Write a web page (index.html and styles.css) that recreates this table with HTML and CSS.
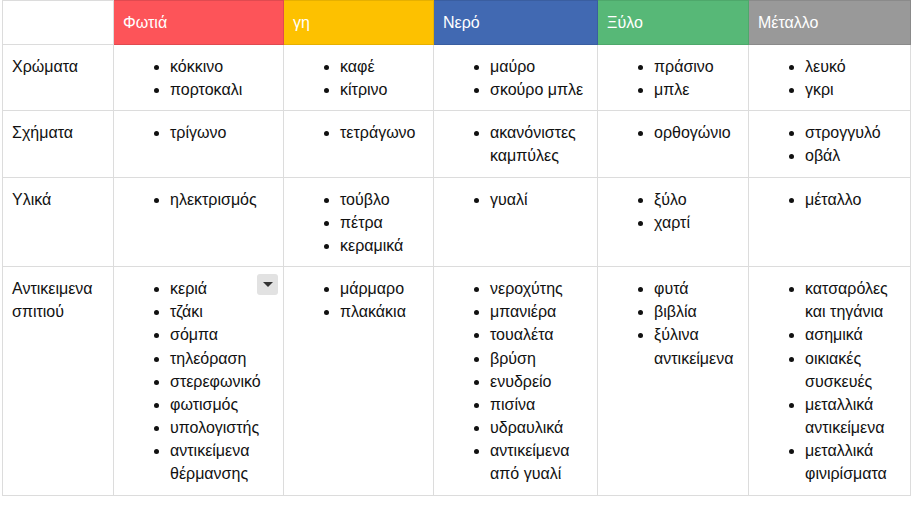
FILE: index.html
```html
<!DOCTYPE html>
<html lang="el">
<head>
<meta charset="utf-8">
<link rel="stylesheet" href="styles.css">
</head>
<body>
<table class="grid">
  <colgroup>
    <col class="c1"><col class="c2"><col class="c3"><col class="c4"><col class="c5"><col class="c6">
  </colgroup>
  <thead>
    <tr>
      <th class="blank"></th>
      <th class="fire">Φωτιά</th>
      <th class="earth">γη</th>
      <th class="water">Νερό</th>
      <th class="wood">Ξύλο</th>
      <th class="metal">Μέταλλο</th>
    </tr>
  </thead>
  <tbody>
    <tr>
      <td class="label">Χρώματα</td>
      <td><ul><li>κόκκινο</li><li>πορτοκαλι</li></ul></td>
      <td><ul><li>καφέ</li><li>κίτρινο</li></ul></td>
      <td><ul><li>μαύρο</li><li>σκούρο μπλε</li></ul></td>
      <td><ul><li>πράσινο</li><li>μπλε</li></ul></td>
      <td><ul><li>λευκό</li><li>γκρι</li></ul></td>
    </tr>
    <tr>
      <td class="label">Σχήματα</td>
      <td><ul><li>τρίγωνο</li></ul></td>
      <td><ul><li>τετράγωνο</li></ul></td>
      <td><ul><li>ακανόνιστες<br>καμπύλες</li></ul></td>
      <td><ul><li>ορθογώνιο</li></ul></td>
      <td><ul><li>στρογγυλό</li><li>οβάλ</li></ul></td>
    </tr>
    <tr>
      <td class="label">Υλικά</td>
      <td><ul><li>ηλεκτρισμός</li></ul></td>
      <td><ul><li>τούβλο</li><li>πέτρα</li><li>κεραμικά</li></ul></td>
      <td><ul><li>γυαλί</li></ul></td>
      <td><ul><li>ξύλο</li><li>χαρτί</li></ul></td>
      <td><ul><li>μέταλλο</li></ul></td>
    </tr>
    <tr>
      <td class="label">Αντικειμενα<br>σπιτιού</td>
      <td class="has-menu">
        <button class="menu-btn" type="button" aria-label="μενού"><span class="tri"></span></button>
        <ul><li>κεριά</li><li>τζάκι</li><li>σόμπα</li><li>τηλεόραση</li><li>στερεφωνικό</li><li>φωτισμός</li><li>υπολογιστής</li><li>αντικείμενα<br>θέρμανσης</li></ul>
      </td>
      <td><ul><li>μάρμαρο</li><li>πλακάκια</li></ul></td>
      <td><ul><li>νεροχύτης</li><li>μπανιέρα</li><li>τουαλέτα</li><li>βρύση</li><li>ενυδρείο</li><li>πισίνα</li><li>υδραυλικά</li><li>αντικείμενα<br>από γυαλί</li></ul></td>
      <td><ul><li>φυτά</li><li>βιβλία</li><li>ξύλινα<br>αντικείμενα</li></ul></td>
      <td><ul><li>κατσαρόλες<br>και τηγάνια</li><li>ασημικά</li><li>οικιακές<br>συσκευές</li><li>μεταλλικά<br>αντικείμενα</li><li>μεταλλικά<br>φινιρίσματα</li></ul></td>
    </tr>
  </tbody>
</table>
</body>
</html>
```

FILE: styles.css
```css
html, body {
  background: #ffffff;
}
body {
  margin: 0 0 0 2px;
  font-family: "Liberation Sans", Arial, sans-serif;
  font-size: 16px;
  line-height: 23.15px;
  color: #111111;
}
.grid {
  border-collapse: collapse;
  table-layout: fixed;
  width: 908px;
}
.c1 { width: 111px; }
.c2 { width: 170px; }
.c3 { width: 150px; }
.c4 { width: 164px; }
.c5 { width: 151px; }
.c6 { width: 162px; }

.grid th,
.grid td {
  border: 1px solid #dcdcdc;
  vertical-align: top;
  text-align: left;
  padding: 10px 9px 9px 9px;
}
.grid th {
  font-weight: normal;
  color: #ffffff;
  line-height: 23px;
  padding: 10px 9px 10px 9px;
}
.grid th.blank { background: #ffffff; }
.grid th.fire { background: #fd5459; border-color: #e04a50; }
.grid th.earth { background: #fdc100; border-color: #e6b000; }
.grid th.water { background: #4169b2; border-color: #3a5ea0; }
.grid th.wood { background: #57b877; border-color: #4ea86b; }
.grid th.metal { background: #999999; border-color: #8a8a8a; }

.grid ul {
  margin: 0;
  padding: 0 0 0 47px;
  list-style: disc;
}
.has-menu {
  position: relative;
}
.menu-btn {
  position: absolute;
  top: 7px;
  right: 5px;
  width: 21px;
  height: 21px;
  border: none;
  border-radius: 3px;
  background: #e2e2e2;
  padding: 0;
  display: flex;
  align-items: center;
  justify-content: center;
}
.tri {
  width: 0;
  height: 0;
  border-left: 5px solid transparent;
  border-right: 5px solid transparent;
  border-top: 5px solid #333333;
}
```
